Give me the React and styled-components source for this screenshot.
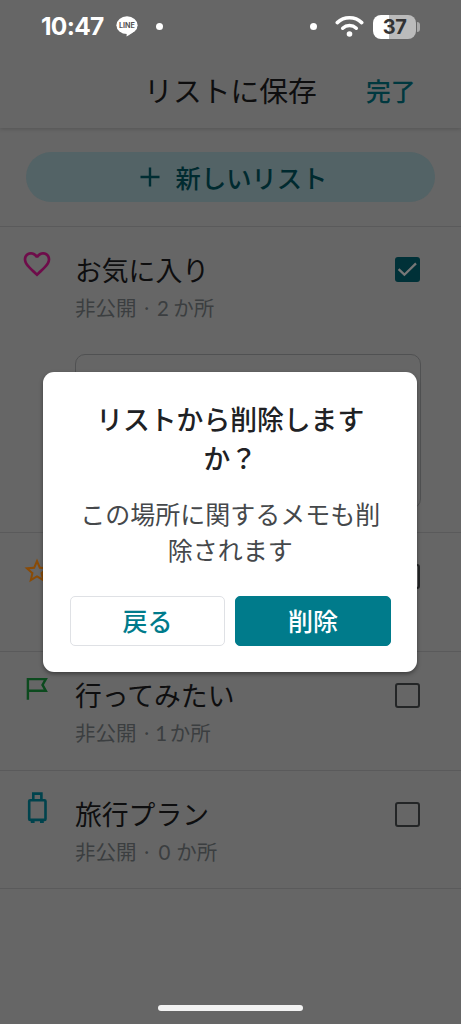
import React from "react";
import styled, { createGlobalStyle } from "styled-components";
import { MdFavoriteBorder, MdStarBorder } from "react-icons/md";

const lists = [
  { id: "favorites", title: "お気に入り", count: "2", countWidth: 11.5, icon: "heart", checked: true, note: true },
  { id: "starred", icon: "star" },
  { id: "want", title: "行ってみたい", count: "1", countWidth: 8, icon: "flag" },
  { id: "travel", title: "旅行プラン", count: "0", countWidth: 14.5, icon: "luggage" },
];

function ListIcon({ name }) {
  switch (name) {
    case "heart":
      return <MdFavoriteBorder size={32} color="#6e0c4a" />;
    case "star":
      return <MdStarBorder size={30} color="#8a4b06" />;
    case "flag":
      return (
        <svg width="28" height="28" viewBox="0 0 28 28" fill="none" stroke="#0c4a1e" strokeWidth="2.4">
          <path d="M4.9 24.7 V4.1 H22.8 L19.5 9.9 L22.8 15.7 H4.9" />
        </svg>
      );
    default:
      return (
        <svg width="28" height="34" viewBox="0 0 28 34" fill="none" stroke="#00434d" strokeWidth="2.6">
          <rect x="6.2" y="9.3" width="16.3" height="19.6" rx="1" />
          <path d="M10.3 8.5 V2.6 H18.4 V8.5" />
          <path d="M7.8 30.7 H11.6 M17 30.7 H20.8" />
        </svg>
      );
  }
}

export default function App() {
  return (
    <>
      <GlobalStyle />
      <Screen>
        <StatusBar>
          <Clock>10:47</Clock>
          <svg width="22" height="21" viewBox="0 0 22 21">
            <ellipse cx="11" cy="9.2" rx="10.6" ry="8.9" fill="#fff" />
            <path d="M21 12 C18 16 14 18.5 10.5 20.6 L10.8 16 Z" fill="#fff" />
            <text x="11" y="11.9" textAnchor="middle" fontFamily="Inter, sans-serif" fontSize="7.2" fontWeight="700" fill="#555">LINE</text>
          </svg>
          <Dot $left={18} />
          <Spacer />
          <Dot />
          <Wifi width="29" height="23" viewBox="0 0 29 23" fill="none" stroke="#fff" strokeLinecap="round">
            <path d="M2.3 7.6 C9 1.2 20 1.2 26.7 7.6" strokeWidth="3.6" />
            <path d="M7.7 13.2 C11.5 9.7 17.5 9.7 21.3 13.2" strokeWidth="3.5" />
            <circle cx="14.5" cy="19" r="2.8" fill="#fff" stroke="none" />
          </Wifi>
          <Battery>37</Battery>
          <BatteryTip />
        </StatusBar>
        <Header>
          <HeaderTitle>リストに保存</HeaderTitle>
          <Done>完了</Done>
        </Header>
        <NewListArea>
          <NewListButton>
            <svg width="20" height="20" viewBox="0 0 20 20" stroke="#002d33" strokeWidth="2.4">
              <path d="M10 .5 V19.5 M.5 10 H19.5" />
            </svg>
            新しいリスト
          </NewListButton>
        </NewListArea>
        {lists.map((list) => (
          <ListItem key={list.id} $tall={list.note}>
            <IconCell $icon={list.icon}>
              <ListIcon name={list.icon} />
            </IconCell>
            <ListBody>
              {list.title && (
                <>
                  <ListTitle>{list.title}</ListTitle>
                  <ListMeta>
                    非公開 · <Count $width={list.countWidth}>{list.count}</Count> か所
                  </ListMeta>
                </>
              )}
              {list.note && <NoteBox />}
            </ListBody>
            <Checkbox $checked={list.checked}>
              {list.checked && (
                <svg width="25" height="25" viewBox="0 0 25 25" fill="none" stroke="#777" strokeWidth="2.3">
                  <path d="M3.6 12.2 L9.4 17.7 L21 6.4" />
                </svg>
              )}
            </Checkbox>
          </ListItem>
        ))}
        <HomeIndicator />
        <Overlay>
          <Dialog>
            <DialogTitle>リストから削除します<br />か？</DialogTitle>
            <DialogText>この場所に関するメモも削<br />除されます</DialogText>
            <Actions>
              <ActionButton>戻る</ActionButton>
              <ActionButton $primary>削除</ActionButton>
            </Actions>
          </Dialog>
        </Overlay>
      </Screen>
    </>
  );
}

const GlobalStyle = createGlobalStyle`
  * {
    box-sizing: border-box;
  }

  body {
    margin: 0;
    background: #666;
    font-family: "Noto Sans CJK JP", sans-serif;
  }
`;

const Screen = styled.div`
  position: relative;
  display: flex;
  flex-direction: column;
  width: 461px;
  height: 1024px;
  overflow: hidden;
  background: #666;
`;

const StatusBar = styled.div`
  display: flex;
  align-items: center;
  flex: none;
  height: 53px;
  padding: 0 41px;
`;

const Clock = styled.span`
  width: 75px;
  color: #fff;
  font-family: Inter, sans-serif;
  font-size: 24.5px;
  font-weight: 700;
  letter-spacing: -0.7px;
  line-height: 53px;
`;

const Dot = styled.span`
  width: 7px;
  height: 7px;
  margin-left: ${({ $left }) => $left || 0}px;
  border-radius: 50%;
  background: #fff;
`;

const Spacer = styled.div`
  flex: 1;
`;

const Wifi = styled.svg`
  margin: 0 9px 0 18px;
`;

const Battery = styled.div`
  width: 43px;
  height: 24px;
  border-radius: 8px;
  background: linear-gradient(to right, #fff 16px, #bbb 16px);
  color: #333;
  font-family: Inter, sans-serif;
  font-size: 20px;
  font-weight: 700;
  letter-spacing: -0.5px;
  line-height: 24px;
  text-align: center;
`;

const BatteryTip = styled.span`
  width: 3px;
  height: 10px;
  margin-left: 1px;
  border-radius: 0 3px 3px 0;
  background: #aaa;
`;

const Header = styled.header`
  display: grid;
  grid-template-columns: 101px 1fr 101px;
  align-items: center;
  flex: none;
  height: 75px;
  padding-bottom: 2px;
  box-shadow: 0 1px 4px rgba(0, 0, 0, 0.18);
  clip-path: inset(0 0 -8px 0);
`;

const HeaderTitle = styled.h1`
  grid-column: 2;
  margin: 0;
  color: #0e0e0f;
  font-size: 28.8px;
  font-weight: 400;
  line-height: 40px;
  text-align: center;
`;

const Done = styled.span`
  padding-left: 6px;
  color: #00383f;
  font-size: 24.8px;
  font-weight: 500;
`;

const NewListArea = styled.div`
  flex: none;
  height: 99px;
  padding: 24px 26px 0;
  border-bottom: 1px solid #5a5a5b;
`;

const NewListButton = styled.div`
  display: flex;
  align-items: center;
  justify-content: center;
  gap: 16px;
  height: 50px;
  padding: 0 0 1px 6px;
  border-radius: 25px;
  background: #536366;
  color: #002a2f;
  font-size: 25.3px;
  font-weight: 500;
`;

const ListItem = styled.div`
  display: flex;
  flex: none;
  height: ${({ $tall }) => ($tall ? 306.3 : 118.7)}px;
  padding: 24px 41px 0 23px;
  border-bottom: 1px solid #5a5a5b;
`;

const iconMargins = {
  heart: "-3px 0 0 -2px",
  star: "-1px 0 0 -1px",
  flag: "-1px 0 0",
  luggage: "-4px 0 0",
};

const IconCell = styled.div`
  flex: none;
  width: 52px;

  svg {
    display: block;
    margin: ${({ $icon }) => iconMargins[$icon]};
  }
`;

const ListBody = styled.div`
  flex: 1;
  min-width: 0;
`;

const ListTitle = styled.div`
  color: #0e0e0f;
  font-size: 26.8px;
  line-height: 38px;
`;

const ListMeta = styled.div`
  color: #3b3e40;
  font-size: 20.5px;
  line-height: 37px;
  white-space: pre;
`;

const Count = styled.span`
  display: inline-block;
  width: ${({ $width }) => $width}px;
  font-family: Lato, sans-serif;
  line-height: 1;
  text-align: center;
  text-indent: ${({ $width }) => Math.min(0, $width - 12) / 2}px;
`;

const NoteBox = styled.div`
  width: 346px;
  height: 155px;
  margin-top: 28px;
  border: 1.5px solid #505152;
  border-radius: 10px;
`;

const Checkbox = styled.div`
  flex: none;
  width: 25px;
  height: 25px;
  margin-top: ${({ $checked }) => ($checked ? 6.4 : 7)}px;
  border: ${({ $checked }) => ($checked ? "none" : "2.5px solid #232526")};
  border-radius: 3px;
  background: ${({ $checked }) => ($checked ? "#003138" : "transparent")};
`;

const HomeIndicator = styled.div`
  width: 145px;
  height: 6px;
  margin: auto auto 13px 158px;
  border-radius: 3px;
  background: #f2f2f2;
`;

const Overlay = styled.div`
  position: absolute;
  inset: 0;
  display: flex;
  align-items: flex-start;
  justify-content: center;
  padding: 371.7px 0.6px 0 0;
`;

const Dialog = styled.div`
  width: 373.6px;
  height: 300px;
  padding: 27px 26.5px 26px;
  border-radius: 11px;
  background: #fff;
  box-shadow: 0 2px 4px rgba(0, 0, 0, 0.4);
  text-align: center;
`;

const DialogTitle = styled.h2`
  margin: 0;
  color: #202124;
  font-size: 26.8px;
  font-weight: 500;
  line-height: 39px;
`;

const DialogText = styled.p`
  margin: 18px 0 0;
  color: #45484b;
  font-size: 25px;
  line-height: 36px;
`;

const Actions = styled.div`
  display: flex;
  gap: 10.5px;
  margin-top: 29px;
`;

const ActionButton = styled.div`
  flex: 1;
  height: 50px;
  border: 1px solid ${({ $primary }) => ($primary ? "#007b8b" : "#dfe1e5")};
  border-radius: 5px;
  background: ${({ $primary }) => ($primary ? "#007b8b" : "#fff")};
  color: ${({ $primary }) => ($primary ? "#fff" : "#007b8b")};
  font-size: 25px;
  font-weight: 500;
  line-height: 47px;
`;
